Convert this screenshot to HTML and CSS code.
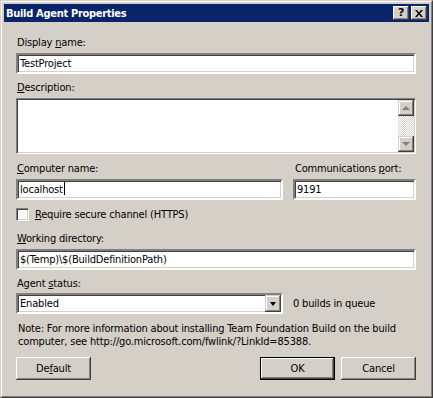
FILE: index.html
```html
<!DOCTYPE html>
<html lang="en">
<head>
    <meta charset="UTF-8">
    <title>Build Agent Properties</title>
    <link rel="stylesheet" href="styles.css">
</head>
<body>
    <div class="window">
        <div class="frame">
            <div class="titlebar">
                <span class="title">Build Agent Properties</span>
                <div class="title-buttons">
                    <span class="tbtn help">?</span>
                    <span class="tbtn close">
                        <svg width="8" height="7" viewBox="0 0 8 7">
                            <path d="M0 0h2l2 2.5 2-2.5h2l-3 3.5 3 3.5h-2l-2-2.5-2 2.5h-2l3-3.5z" fill="#000"/>
                        </svg>
                    </span>
                </div>
            </div>

            <div class="content">
                <div class="label first">Display <u>n</u>ame:</div>
                <div class="field">TestProject</div>

                <div class="label">
                    <u>D</u>escription:</div>
                <div class="field memo">
                    <div class="scrollbar">
                        <span class="sbtn"><span class="arrow up"></span></span>
                        <span class="track"></span>
                        <span class="sbtn"><span class="arrow down"></span></span>
                    </div>
                </div>

                <div class="row">
                    <div class="col wide">
                        <div class="label"><u>C</u>omputer name:</div>
                        <div class="field">localhost<span class="caret"></span></div>
                    </div>
                    <div class="col narrow">
                        <div class="label port-label">Communications <u>p</u>ort:</div>
                        <div class="field">9191</div>
                    </div>
                </div>

                <div class="check-row">
                    <span class="checkbox"></span>
                    <span><u>R</u>equire secure channel (HTTPS)</span>
                </div>

                <div class="label working"><u>W</u>orking directory:</div>
                <div class="field">$(Temp)\$(BuildDefinitionPath)</div>

                <div class="label">Agent <u>s</u>tatus:</div>
                <div class="select-row">
                    <div class="field select">
                        Enabled
                        <span class="dropbtn"><span class="arrow down black"></span></span>
                    </div>
                    <span class="queue">0 builds in queue</span>
                </div>

                <p class="note">Note: For more information about installing Team Foundation Build on the build computer, see http://go.microsoft.com/fwlink/?LinkId=85388.</p>

                <div class="buttons">
                    <button class="btn">De<u>f</u>ault</button>
                    <span class="spacer"></span>
                    <button class="btn default">OK</button>
                    <button class="btn">Cancel</button>
                </div>
            </div>
        </div>
    </div>
</body>
</html>
```

FILE: styles.css
```css
* {
    box-sizing: border-box;
}
body {
    margin: 0;
    font-family: "DejaVu Sans Condensed", "Liberation Sans", sans-serif;
    font-size: 11px;
    letter-spacing: -0.18px;
    color: #000;
    background: #d4d0c8;
}
.window {
    width: 433px;
    height: 398px;
    background: #d4d0c8;
    border: 1px solid;
    border-color: #d4d0c8 #404040 #404040 #d4d0c8;
}
.frame {
    height: 100%;
    border: 1px solid;
    border-color: #fff #808080 #808080 #fff;
    padding: 2px;
}
.titlebar {
    height: 18px;
    background: #0a246a;
    display: flex;
    align-items: center;
    justify-content: space-between;
    padding: 0 2px 0 2px;
}
.title {
    color: #fff;
    font-weight: bold;
    font-size: 11px;
    letter-spacing: -0.3px;
}
.title-buttons {
    display: flex;
    gap: 2px;
}
.tbtn {
    width: 16px;
    height: 14px;
    background: #d4d0c8;
    box-shadow: inset -1px -1px #404040, inset 1px 1px #fff, inset -2px -2px #808080;
    display: flex;
    align-items: center;
    justify-content: center;
}
.help {
    font-weight: bold;
    font-family: "DejaVu Sans", sans-serif;
    font-size: 11px;
    line-height: 14px;
}
.content {
    padding: 0 13px 0 12px;
}
.label {
    line-height: 13px;
    margin-top: 7px;
    margin-bottom: 4px;
    padding-left: 1px;
}
.label.first {
    margin-top: 14px;
}
.field {
    height: 21px;
    background: #fff;
    border: 2px solid;
    border-color: #808080 #fff #fff #808080;
    box-shadow: inset 1px 1px #404040, inset -1px -1px #d4d0c8;
    padding: 0 2px;
    line-height: 17px;
    white-space: nowrap;
    position: relative;
}
.field.memo {
    height: 56px;
    display: flex;
    justify-content: flex-end;
    padding: 1px 1px 1px 1px;
    border-width: 1px;
    border-color: #808080 #fff #fff #808080;
}
.scrollbar {
    width: 16px;
    display: flex;
    flex-direction: column;
}
.track {
    flex: 1;
    background-color: #fff;
    background-image: conic-gradient(#d4d0c8 25%, #fff 0 50%, #d4d0c8 0 75%, #fff 0);
    background-size: 2px 2px;
}
.sbtn, .dropbtn {
    width: 16px;
    height: 16px;
    background: #d4d0c8;
    box-shadow: inset -1px -1px #404040, inset 1px 1px #d4d0c8, inset -2px -2px #808080, inset 2px 2px #fff;
    display: flex;
    align-items: center;
    justify-content: center;
}
.arrow {
    width: 0;
    height: 0;
    border-left: 4px solid transparent;
    border-right: 4px solid transparent;
}
.arrow.up {
    border-bottom: 4px solid #808080;
}
.arrow.down {
    border-top: 4px solid #808080;
}
.arrow.black {
    border-top-color: #000;
    border-left-width: 3.5px;
    border-right-width: 3.5px;
}
.caret {
    display: inline-block;
    width: 1px;
    height: 13px;
    background: #000;
    vertical-align: -2px;
    margin-left: 1px;
}
.row {
    display: flex;
    gap: 10px;
    margin-top: 1px;
}
.col.wide {
    width: 267px;
}
.col.narrow {
    flex: 1;
}
.port-label {
    padding-left: 2px;
}
.check-row {
    display: flex;
    align-items: center;
    gap: 6px;
    margin-top: 8px;
    line-height: 13px;
}
.checkbox {
    width: 13px;
    height: 13px;
    background: #fff;
    border: 1px solid;
    border-color: #808080 #fff #fff #808080;
    box-shadow: inset 1px 1px #404040, inset -1px -1px #d4d0c8;
}
.label.working {
    margin-top: 11px;
}
.select-row {
    display: flex;
    align-items: center;
    gap: 10px;
    margin-top: -1px;
}
.field.select {
    width: 267px;
    display: flex;
    justify-content: space-between;
    align-items: center;
    padding-right: 0;
}
.dropbtn {
    height: 17px;
}
.note {
    margin: 8px 0 0 0;
    padding-left: 2px;
    line-height: 13px;
}
.buttons {
    display: flex;
    gap: 6px;
    margin-top: 9px;
}
.spacer {
    flex: 1;
}
.btn {
    width: 75px;
    height: 23px;
    font: inherit;
    letter-spacing: inherit;
    color: #000;
    background: #d4d0c8;
    border: none;
    padding: 0;
    box-shadow: inset -1px -1px #404040, inset 1px 1px #fff, inset -2px -2px #808080, inset 2px 2px #d4d0c8;
}
.btn.default {
    border: 1px solid #000;
    box-shadow: inset -1px -1px #404040, inset 1px 1px #fff, inset -2px -2px #808080;
}
```
